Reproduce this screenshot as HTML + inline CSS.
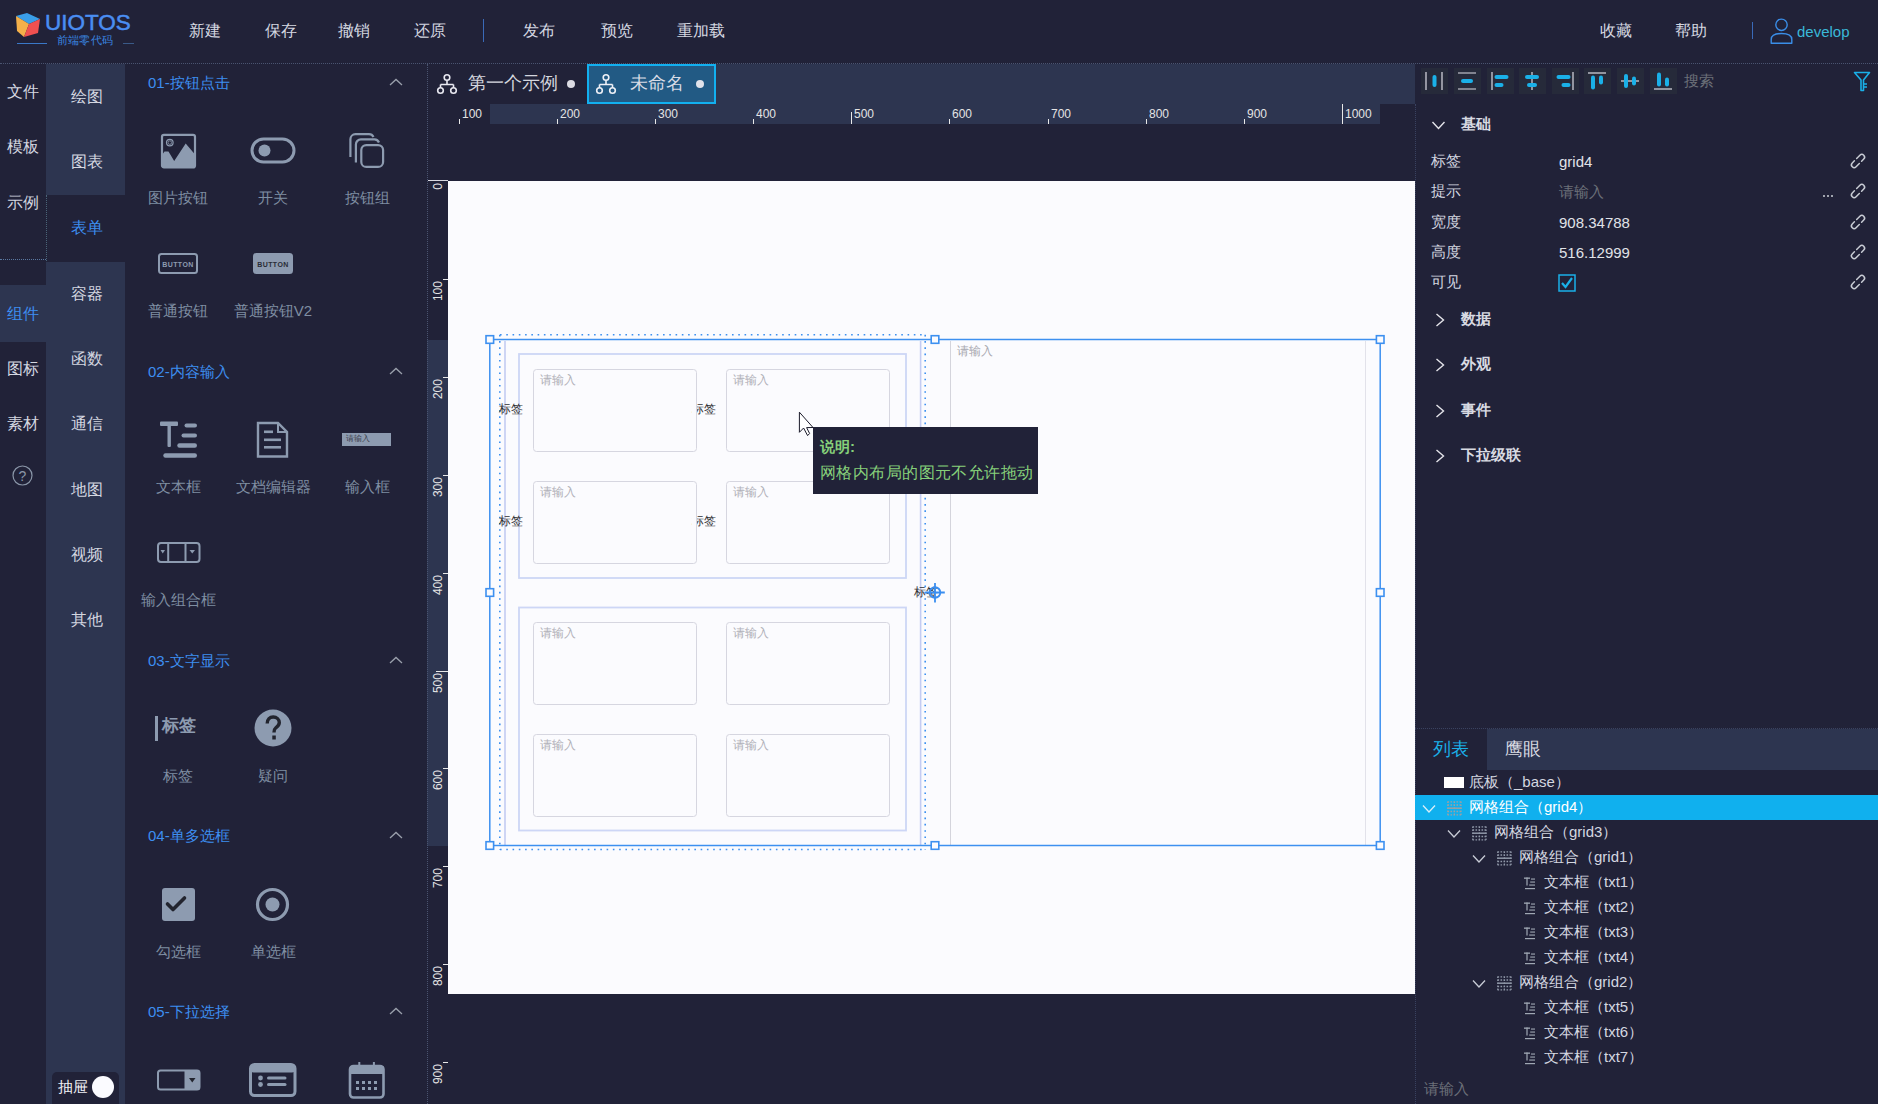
<!DOCTYPE html>
<html><head><meta charset="utf-8">
<style>
*{box-sizing:border-box;margin:0;padding:0}
html,body{width:1878px;height:1104px;overflow:hidden}
body{position:relative;background:#212238;font-family:"Liberation Sans",sans-serif;color:#d6d9e2}
.a{position:absolute}
.t{position:absolute;white-space:nowrap;line-height:1}
.lt{background:#2d3550}
.hd{font-size:16px;color:#d4d7e0}
.n1{font-size:16px;color:#d4d7e0}
.n2{font-size:16px;color:#d4d7e0}
.sec{font-size:15px;color:#3d8ef0}
.lbl{font-size:15px;color:#7f8ea2;text-align:center;width:100px}
.rul{font-size:12px;color:#e4e4e4}
.pl{font-size:15px;color:#d4d7e0}
.pv{font-size:15px;color:#e0e2e8}
.ph{font-size:15px;color:#d8dae2;font-weight:bold}
.tr{font-size:15px;color:#d4d7e0}
</style></head><body>
<div class="a" style="left:0;top:63px;width:1878px;height:1px;border-top:1px dotted #4a5470"></div>
<svg class="a" style="left:14px;top:11px" width="28" height="28" viewBox="0 0 28 28">
<polygon points="2,5 13,2 26,8 15,13" fill="#3a9ee8"/>
<polygon points="2,5 15,13 10,26 3,20" fill="#f4b04a"/>
<polygon points="15,13 26,8 24,22 10,26" fill="#f05050"/>
</svg>
<div class="t" style="left:45px;top:12px;font-size:22.5px;color:#4a8ef2;-webkit-text-stroke:0.5px #4a8ef2">UIOTOS</div>
<div class="t" style="left:57px;top:35px;font-size:11px;color:#3a86e0;letter-spacing:0.2px">前端零代码</div>
<div class="a" style="left:17px;top:43px;width:30px;height:1px;background:#3a78c8"></div>
<div class="a" style="left:123px;top:43px;width:11px;height:1px;background:#3a5a88"></div>
<div class="t hd" style="left:189px;top:23px">新建</div>
<div class="t hd" style="left:265px;top:23px">保存</div>
<div class="t hd" style="left:338px;top:23px">撤销</div>
<div class="t hd" style="left:414px;top:23px">还原</div>
<div class="t hd" style="left:523px;top:23px">发布</div>
<div class="t hd" style="left:601px;top:23px">预览</div>
<div class="t hd" style="left:677px;top:23px">重加载</div>
<div class="t hd" style="left:1600px;top:23px">收藏</div>
<div class="t hd" style="left:1675px;top:23px">帮助</div>
<div class="a" style="left:483px;top:19px;width:1px;height:23px;background:#3a6ab8"></div>
<div class="a" style="left:1752px;top:22px;width:1px;height:17px;background:#3a6ab8"></div>
<svg class="a" style="left:1769px;top:18px" width="25" height="27" viewBox="0 0 25 27">
<circle cx="12.5" cy="6.8" r="5.7" fill="none" stroke="#3a8ee8" stroke-width="1.4"/>
<path d="M2.2,25.2 L2.2,21.5 C2.2,17.5 5.5,15.5 12.5,15.5 C19.5,15.5 22.8,17.5 22.8,21.5 L22.8,25.2 Z" fill="none" stroke="#3a8ee8" stroke-width="1.4" stroke-linejoin="round"/>
</svg>
<div class="t" style="left:1797px;top:24px;font-size:15px;color:#3ab8d8">develop</div>
<div class="a lt" style="left:46px;top:64px;width:79px;height:1040px"></div>
<div class="a" style="left:46px;top:195px;width:79px;height:67px;background:#212238"></div>
<div class="a lt" style="left:0;top:285px;width:46px;height:57px"></div>
<div class="a" style="left:0;top:259px;width:46px;height:1px;border-top:1px dotted #5a78a0"></div>
<div class="a" style="left:46px;top:195px;width:1px;height:66px;border-left:1px dotted #4a6478"></div>
<div class="t n1" style="left:7px;top:84px">文件</div>
<div class="t n1" style="left:7px;top:139px">模板</div>
<div class="t n1" style="left:7px;top:195px">示例</div>
<div class="t n1" style="left:7px;top:306px;color:#3d8ef0">组件</div>
<div class="t n1" style="left:7px;top:361px">图标</div>
<div class="t n1" style="left:7px;top:416px">素材</div>
<svg class="a" style="left:12px;top:465px" width="21" height="21" viewBox="0 0 21 21"><circle cx="10.5" cy="10.5" r="9.5" fill="none" stroke="#8a96a8" stroke-width="1.2"/><text x="10.5" y="15.5" font-size="14" text-anchor="middle" fill="#8a96a8" font-family="Liberation Sans">?</text></svg>
<div class="t n2" style="left:71px;top:89px">绘图</div>
<div class="t n2" style="left:71px;top:154px">图表</div>
<div class="t n2" style="left:71px;top:220px;color:#3d8ef0">表单</div>
<div class="t n2" style="left:71px;top:286px">容器</div>
<div class="t n2" style="left:71px;top:351px">函数</div>
<div class="t n2" style="left:71px;top:416px">通信</div>
<div class="t n2" style="left:71px;top:482px">地图</div>
<div class="t n2" style="left:71px;top:547px">视频</div>
<div class="t n2" style="left:71px;top:612px">其他</div>
<div class="a" style="left:52px;top:1072px;width:67px;height:40px;border-radius:5px;background:#212238"></div>
<div class="t" style="left:58px;top:1079px;font-size:15px;color:#eeeef4">抽屉</div>
<div class="a" style="left:92px;top:1076px;width:22px;height:22px;border-radius:50%;background:#fbfbff"></div>
<div class="t sec" style="left:148px;top:75px">01-按钮点击</div>
<svg class="a" style="left:389px;top:78px" width="14" height="8" viewBox="0 0 14 8"><path d="M1,7 L7,1.5 L13,7" fill="none" stroke="#9aa0ac" stroke-width="1.3"/></svg>
<div class="t sec" style="left:148px;top:364px">02-内容输入</div>
<svg class="a" style="left:389px;top:367px" width="14" height="8" viewBox="0 0 14 8"><path d="M1,7 L7,1.5 L13,7" fill="none" stroke="#9aa0ac" stroke-width="1.3"/></svg>
<div class="t sec" style="left:148px;top:653px">03-文字显示</div>
<svg class="a" style="left:389px;top:656px" width="14" height="8" viewBox="0 0 14 8"><path d="M1,7 L7,1.5 L13,7" fill="none" stroke="#9aa0ac" stroke-width="1.3"/></svg>
<div class="t sec" style="left:148px;top:828px">04-单多选框</div>
<svg class="a" style="left:389px;top:831px" width="14" height="8" viewBox="0 0 14 8"><path d="M1,7 L7,1.5 L13,7" fill="none" stroke="#9aa0ac" stroke-width="1.3"/></svg>
<div class="t sec" style="left:148px;top:1004px">05-下拉选择</div>
<svg class="a" style="left:389px;top:1007px" width="14" height="8" viewBox="0 0 14 8"><path d="M1,7 L7,1.5 L13,7" fill="none" stroke="#9aa0ac" stroke-width="1.3"/></svg>
<div class="t lbl" style="left:128px;top:190px">图片按钮</div>
<div class="t lbl" style="left:223px;top:190px">开关</div>
<div class="t lbl" style="left:317px;top:190px">按钮组</div>
<div class="t lbl" style="left:128px;top:303px">普通按钮</div>
<div class="t lbl" style="left:223px;top:303px">普通按钮V2</div>
<div class="t lbl" style="left:128px;top:479px">文本框</div>
<div class="t lbl" style="left:223px;top:479px">文档编辑器</div>
<div class="t lbl" style="left:317px;top:479px">输入框</div>
<div class="t lbl" style="left:128px;top:592px">输入组合框</div>
<div class="t lbl" style="left:128px;top:768px">标签</div>
<div class="t lbl" style="left:223px;top:768px">疑问</div>
<div class="t lbl" style="left:128px;top:944px">勾选框</div>
<div class="t lbl" style="left:223px;top:944px">单选框</div>
<svg class="a" style="left:160px;top:133px" width="37" height="36" viewBox="0 0 37 36">
<rect x="2" y="1.8" width="33" height="32.6" rx="2" fill="none" stroke="#8d9bb0" stroke-width="2.2"/>
<path d="M2,22 L4.5,18.5 L8.5,18.5 L14.2,28 L25.7,10.5 L35,21.5 L35,34.4 L2,34.4 Z" fill="#8d9bb0"/>
<circle cx="9.8" cy="9.6" r="3.3" fill="none" stroke="#8d9bb0" stroke-width="1.2"/>
<circle cx="9.8" cy="9.6" r="1.8" fill="none" stroke="#8d9bb0" stroke-width="0.8"/>
</svg>
<svg class="a" style="left:250px;top:137px" width="46" height="27" viewBox="0 0 46 27">
<rect x="2" y="2" width="42" height="23" rx="11.5" fill="none" stroke="#8d9bb0" stroke-width="3"/>
<circle cx="14.5" cy="13.5" r="6" fill="#8d9bb0"/>
</svg>
<svg class="a" style="left:348px;top:132px" width="38" height="38" viewBox="0 0 38 38">
<path d="M2.4,25 L2.4,7.2 A5,5 0 0 1 7.4,2.2 L21,2.2 A5,5 0 0 1 25.5,5" fill="none" stroke="#8d9bb0" stroke-width="2.2"/>
<path d="M7.9,30.5 L7.9,12.4 A5,5 0 0 1 12.9,7.4 L26.5,7.4 A5,5 0 0 1 31,10.5" fill="none" stroke="#8d9bb0" stroke-width="2.2"/>
<rect x="13.3" y="13.1" width="21.8" height="21.8" rx="5" fill="none" stroke="#8d9bb0" stroke-width="2.2"/>
</svg>
<svg class="a" style="left:157px;top:252px" width="43" height="24" viewBox="0 0 43 24">
<rect x="2" y="2" width="38" height="19" rx="2.5" fill="none" stroke="#8d9bb0" stroke-width="2"/>
<text x="21" y="14.5" font-size="7" font-weight="bold" text-anchor="middle" fill="#8d9bb0" font-family="Liberation Sans" letter-spacing="0.4">BUTTON</text>
</svg>
<svg class="a" style="left:252px;top:252px" width="43" height="24" viewBox="0 0 43 24">
<rect x="1" y="1" width="40" height="21" rx="3.5" fill="#8d9bb0"/>
<text x="21" y="14.5" font-size="7" font-weight="bold" text-anchor="middle" fill="#2a2c36" font-family="Liberation Sans" letter-spacing="0.4">BUTTON</text>
</svg>
<svg class="a" style="left:159px;top:420px" width="40" height="40" viewBox="0 0 40 40">
<rect x="1" y="1.5" width="18" height="4.5" rx="1" fill="#8d9bb0"/>
<rect x="8.5" y="4" width="3.4" height="23" rx="1" fill="#8d9bb0"/>
<rect x="25.5" y="3.5" width="12.5" height="4" rx="2" fill="#8d9bb0"/>
<rect x="22.5" y="13.5" width="15.5" height="4" rx="2" fill="#8d9bb0"/>
<rect x="18.3" y="23.3" width="19.7" height="4.5" rx="2.2" fill="#8d9bb0"/>
<rect x="4.3" y="33.2" width="33.7" height="4.5" rx="2.2" fill="#8d9bb0"/>
</svg>
<svg class="a" style="left:256px;top:421px" width="34" height="38" viewBox="0 0 34 38">
<path d="M2,2 L22,2 L31,11 L31,35.5 L2,35.5 Z" fill="none" stroke="#8d9bb0" stroke-width="2.4"/>
<path d="M22,2 L22,11 L31,11" fill="none" stroke="#8d9bb0" stroke-width="2"/>
<rect x="8" y="9.5" width="9" height="2.6" fill="#8d9bb0"/>
<rect x="8" y="17.5" width="17" height="2.6" fill="#8d9bb0"/>
<rect x="8" y="25" width="17" height="2.6" fill="#8d9bb0"/>
</svg>
<div class="a" style="left:342px;top:433px;width:49px;height:13px;background:#8d9bb0"></div>
<div class="t" style="left:346px;top:435px;font-size:8px;color:#3c404c">请输入</div>
<svg class="a" style="left:156px;top:541px" width="46" height="23" viewBox="0 0 46 23">
<rect x="2" y="2" width="41.5" height="19" rx="3" fill="none" stroke="#8d9bb0" stroke-width="2"/>
<rect x="11.2" y="2" width="2" height="19" fill="#8d9bb0"/>
<rect x="28.5" y="2" width="2" height="19" fill="#8d9bb0"/>
<path d="M4.5,9 L9,9 L6.75,12.5 Z" fill="#8d9bb0"/>
<path d="M33.5,9 L39,9 L36.25,12.5 Z" fill="#8d9bb0"/>
</svg>
<div class="a" style="left:155px;top:716px;width:3px;height:25px;background:#8d9bb0"></div>
<div class="t" style="left:162px;top:717px;font-size:17px;font-weight:bold;color:#8d9bb0">标签</div>
<svg class="a" style="left:254px;top:709px" width="38" height="38" viewBox="0 0 38 38">
<circle cx="19" cy="19" r="18.5" fill="#8d9bb0"/>
<path d="M13.2,14.5 C13.2,10.5 15.8,8 19.2,8 C22.8,8 25.3,10.5 25.3,13.6 C25.3,16.6 23.2,17.8 21.6,19 C20.3,20 20,21 20,23.5" fill="none" stroke="#22242e" stroke-width="3.4"/>
<rect x="18.3" y="26.5" width="3.5" height="4" fill="#22242e"/>
</svg>
<svg class="a" style="left:161px;top:887px" width="35" height="35" viewBox="0 0 35 35">
<rect x="1" y="1" width="33" height="33" rx="3" fill="#8d9bb0"/>
<path d="M6.5,17 L12,22.5 L23.5,11" fill="none" stroke="#22242e" stroke-width="3.6" stroke-linecap="round" stroke-linejoin="round"/>
</svg>
<svg class="a" style="left:255px;top:887px" width="35" height="35" viewBox="0 0 35 35">
<circle cx="17.5" cy="17.5" r="15" fill="none" stroke="#8d9bb0" stroke-width="3.2"/>
<circle cx="17.5" cy="17.5" r="7" fill="#8d9bb0"/>
</svg>
<svg class="a" style="left:156px;top:1069px" width="46" height="23" viewBox="0 0 46 23">
<rect x="2" y="1.5" width="41.5" height="19" rx="2.5" fill="none" stroke="#8d9bb0" stroke-width="2"/>
<rect x="28.5" y="1.5" width="15" height="19" fill="#8d9bb0"/>
<path d="M33,9 L39.5,9 L36.25,13.5 Z" fill="#22242e"/>
</svg>
<svg class="a" style="left:249px;top:1063px" width="48" height="34" viewBox="0 0 48 34">
<rect x="1.5" y="1.5" width="44.5" height="31" rx="4" fill="none" stroke="#8d9bb0" stroke-width="3"/>
<rect x="1.5" y="1.5" width="44.5" height="8" rx="3" fill="#8d9bb0"/>
<circle cx="11.5" cy="15" r="2.4" fill="#8d9bb0"/>
<circle cx="11.5" cy="21.5" r="2.4" fill="#8d9bb0"/>
<rect x="18" y="13.5" width="19.5" height="3" rx="1.5" fill="#8d9bb0"/>
<rect x="18" y="20" width="19.5" height="3" rx="1.5" fill="#8d9bb0"/>
</svg>
<svg class="a" style="left:348px;top:1061px" width="38" height="39" viewBox="0 0 38 39">
<rect x="2" y="5" width="33.5" height="31.5" rx="3.5" fill="none" stroke="#8d9bb0" stroke-width="2.6"/>
<rect x="2" y="5" width="33.5" height="8" fill="#8d9bb0"/>
<rect x="10.3" y="1" width="2" height="9" fill="#8d9bb0"/>
<rect x="24.9" y="1" width="2" height="9" fill="#8d9bb0"/>
<g fill="#8d9bb0"><rect x="8" y="20" width="3" height="3"/><rect x="14" y="20" width="3" height="3"/><rect x="20" y="20" width="3" height="3"/><rect x="26" y="20" width="3" height="3"/>
<rect x="8" y="26" width="3" height="3"/><rect x="14" y="26" width="3" height="3"/><rect x="20" y="26" width="3" height="3"/><rect x="26" y="26" width="3" height="3"/></g>
</svg>
<div class="a lt" style="left:715px;top:64px;width:700px;height:40px"></div>
<svg class="a" style="left:436px;top:73px" width="22" height="22" viewBox="0 0 22 22">
<circle cx="11" cy="4.5" r="2.8" fill="none" stroke="#e8e8f0" stroke-width="1.6"/>
<path d="M11,7.3 L11,11.5 M4.5,11.5 L17.5,11.5 M4.5,11.5 L4.5,14.8 M17.5,11.5 L17.5,14.8" fill="none" stroke="#e8e8f0" stroke-width="1.6"/>
<circle cx="4.5" cy="17.5" r="2.8" fill="none" stroke="#e8e8f0" stroke-width="1.6"/>
<circle cx="17.5" cy="17.5" r="2.8" fill="none" stroke="#e8e8f0" stroke-width="1.6"/>
</svg>
<div class="t" style="left:468px;top:75px;font-size:17.5px;color:#d4d6de">第一个示例</div>
<div class="a" style="left:567px;top:80px;width:8px;height:8px;border-radius:50%;background:#dcdce4"></div>
<div class="a" style="left:587px;top:64px;width:129px;height:40px;background:#225a84;border:2px solid #12b0f0"></div>
<svg class="a" style="left:595px;top:73px" width="22" height="22" viewBox="0 0 22 22">
<circle cx="11" cy="4.5" r="2.8" fill="none" stroke="#eef0f6" stroke-width="1.6"/>
<path d="M11,7.3 L11,11.5 M4.5,11.5 L17.5,11.5 M4.5,11.5 L4.5,14.8 M17.5,11.5 L17.5,14.8" fill="none" stroke="#eef0f6" stroke-width="1.6"/>
<circle cx="4.5" cy="17.5" r="2.8" fill="none" stroke="#eef0f6" stroke-width="1.6"/>
<circle cx="17.5" cy="17.5" r="2.8" fill="none" stroke="#eef0f6" stroke-width="1.6"/>
</svg>
<div class="t" style="left:630px;top:75px;font-size:17.5px;color:#d8dce6">未命名</div>
<div class="a" style="left:696px;top:80px;width:8px;height:8px;border-radius:50%;background:#e0e2ea"></div>
<div class="a lt" style="left:490px;top:104px;width:890px;height:20px"></div>
<div class="a" style="left:459px;top:119px;width:1px;height:5px;background:#e8e8e8"></div>
<div class="t rul" style="left:462px;top:108px">100</div>
<div class="a" style="left:557px;top:119px;width:1px;height:5px;background:#e8e8e8"></div>
<div class="t rul" style="left:560px;top:108px">200</div>
<div class="a" style="left:655px;top:119px;width:1px;height:5px;background:#e8e8e8"></div>
<div class="t rul" style="left:658px;top:108px">300</div>
<div class="a" style="left:753px;top:119px;width:1px;height:5px;background:#e8e8e8"></div>
<div class="t rul" style="left:756px;top:108px">400</div>
<div class="a" style="left:851px;top:112px;width:1px;height:12px;background:#e8e8e8"></div>
<div class="t rul" style="left:854px;top:108px">500</div>
<div class="a" style="left:949px;top:119px;width:1px;height:5px;background:#e8e8e8"></div>
<div class="t rul" style="left:952px;top:108px">600</div>
<div class="a" style="left:1048px;top:119px;width:1px;height:5px;background:#e8e8e8"></div>
<div class="t rul" style="left:1051px;top:108px">700</div>
<div class="a" style="left:1146px;top:119px;width:1px;height:5px;background:#e8e8e8"></div>
<div class="t rul" style="left:1149px;top:108px">800</div>
<div class="a" style="left:1244px;top:119px;width:1px;height:5px;background:#e8e8e8"></div>
<div class="t rul" style="left:1247px;top:108px">900</div>
<div class="a" style="left:1342px;top:104px;width:1px;height:20px;background:#e8e8e8"></div>
<div class="t rul" style="left:1345px;top:108px">1000</div>
<div class="a lt" style="left:427px;top:340px;width:21px;height:506px"></div>
<div class="a" style="left:427px;top:64px;width:1px;height:1040px;border-left:1px dotted #4a5470"></div>
<div class="a" style="left:428px;top:180px;width:20px;height:1px;background:#d8d8e0"></div>
<div class="t rul" style="left:432px;top:182px;transform-origin:0 0;transform:translate(0px,7.7px) rotate(-90deg)">0</div>
<div class="a" style="left:443px;top:279px;width:5px;height:1px;background:#e8e8e8"></div>
<div class="t rul" style="left:432px;top:280px;transform-origin:0 0;transform:translate(0px,21.1px) rotate(-90deg)">100</div>
<div class="a" style="left:443px;top:377px;width:5px;height:1px;background:#e8e8e8"></div>
<div class="t rul" style="left:432px;top:378px;transform-origin:0 0;transform:translate(0px,21.1px) rotate(-90deg)">200</div>
<div class="a" style="left:443px;top:475px;width:5px;height:1px;background:#e8e8e8"></div>
<div class="t rul" style="left:432px;top:476px;transform-origin:0 0;transform:translate(0px,21.1px) rotate(-90deg)">300</div>
<div class="a" style="left:443px;top:573px;width:5px;height:1px;background:#e8e8e8"></div>
<div class="t rul" style="left:432px;top:574px;transform-origin:0 0;transform:translate(0px,21.1px) rotate(-90deg)">400</div>
<div class="a" style="left:436px;top:671px;width:12px;height:1px;background:#e8e8e8"></div>
<div class="t rul" style="left:432px;top:672px;transform-origin:0 0;transform:translate(0px,21.1px) rotate(-90deg)">500</div>
<div class="a" style="left:443px;top:768px;width:5px;height:1px;background:#e8e8e8"></div>
<div class="t rul" style="left:432px;top:769px;transform-origin:0 0;transform:translate(0px,21.1px) rotate(-90deg)">600</div>
<div class="a" style="left:443px;top:866px;width:5px;height:1px;background:#e8e8e8"></div>
<div class="t rul" style="left:432px;top:867px;transform-origin:0 0;transform:translate(0px,21.1px) rotate(-90deg)">700</div>
<div class="a" style="left:443px;top:964px;width:5px;height:1px;background:#e8e8e8"></div>
<div class="t rul" style="left:432px;top:965px;transform-origin:0 0;transform:translate(0px,21.1px) rotate(-90deg)">800</div>
<div class="a" style="left:443px;top:1062px;width:5px;height:1px;background:#e8e8e8"></div>
<div class="t rul" style="left:432px;top:1063px;transform-origin:0 0;transform:translate(0px,21.1px) rotate(-90deg)">900</div>
<div class="a" style="left:448px;top:181px;width:967px;height:813px;background:#fbfbfe"></div>
<svg class="a" style="left:448px;top:181px" width="967" height="813" viewBox="448 181 967 813">
<g stroke="#3d90f0" stroke-width="1.6" stroke-dasharray="1.6 4.67" fill="none">
<path d="M500,334.8 L925,334.8"/><path d="M500,849.5 L925,849.5"/><path d="M499.8,334.8 L499.8,849.5"/><path d="M925.2,334.8 L925.2,849.5"/>
</g>
<g stroke="#c4ccf2" stroke-width="1.6" fill="none"><path d="M505,341 L505,845"/><path d="M920.6,341 L920.6,845"/></g>
<g stroke="#d4d4dc" stroke-width="1" fill="none"><path d="M950.5,341 L950.5,845"/></g>
<g stroke="#e2e2ea" stroke-width="1" fill="none"><path d="M1365.5,341 L1365.5,845"/></g>
<rect x="519" y="354" width="387" height="224" fill="none" stroke="#cdd6f6" stroke-width="1.8"/>
<rect x="519" y="607.5" width="387" height="223" fill="none" stroke="#cdd6f6" stroke-width="1.8"/>
<rect x="533.5" y="369.5" width="163" height="82" rx="3" fill="#fbfbfe" stroke="#d6d6e0" stroke-width="1"/>
<rect x="726.5" y="369.5" width="163" height="82" rx="3" fill="#fbfbfe" stroke="#d6d6e0" stroke-width="1"/>
<rect x="533.5" y="481.5" width="163" height="82" rx="3" fill="#fbfbfe" stroke="#d6d6e0" stroke-width="1"/>
<rect x="726.5" y="481.5" width="163" height="82" rx="3" fill="#fbfbfe" stroke="#d6d6e0" stroke-width="1"/>
<rect x="533.5" y="622.5" width="163" height="82" rx="3" fill="#fbfbfe" stroke="#d6d6e0" stroke-width="1"/>
<rect x="726.5" y="622.5" width="163" height="82" rx="3" fill="#fbfbfe" stroke="#d6d6e0" stroke-width="1"/>
<rect x="533.5" y="734.5" width="163" height="82" rx="3" fill="#fbfbfe" stroke="#d6d6e0" stroke-width="1"/>
<rect x="726.5" y="734.5" width="163" height="82" rx="3" fill="#fbfbfe" stroke="#d6d6e0" stroke-width="1"/>
</svg>
<div class="t" style="left:540px;top:374px;font-size:12px;color:#b0b0b8">请输入</div>
<div class="t" style="left:733px;top:374px;font-size:12px;color:#b0b0b8">请输入</div>
<div class="t" style="left:540px;top:486px;font-size:12px;color:#b0b0b8">请输入</div>
<div class="t" style="left:733px;top:486px;font-size:12px;color:#b0b0b8">请输入</div>
<div class="t" style="left:540px;top:627px;font-size:12px;color:#b0b0b8">请输入</div>
<div class="t" style="left:733px;top:627px;font-size:12px;color:#b0b0b8">请输入</div>
<div class="t" style="left:540px;top:739px;font-size:12px;color:#b0b0b8">请输入</div>
<div class="t" style="left:733px;top:739px;font-size:12px;color:#b0b0b8">请输入</div>
<div class="t" style="left:499px;top:403px;font-size:12px;color:#303034">标签</div>
<div class="t" style="left:692px;top:403px;font-size:12px;color:#303034">标签</div>
<div class="t" style="left:499px;top:515px;font-size:12px;color:#303034">标签</div>
<div class="t" style="left:692px;top:515px;font-size:12px;color:#303034">标签</div>
<div class="a" style="left:692px;top:402px;width:4px;height:15px;background:#fbfbfe"></div>
<div class="a" style="left:696px;top:402px;width:1px;height:15px;background:#d6d6e0"></div>
<div class="a" style="left:692px;top:514px;width:4px;height:15px;background:#fbfbfe"></div>
<div class="a" style="left:696px;top:514px;width:1px;height:15px;background:#d6d6e0"></div>
<div class="t" style="left:957px;top:345px;font-size:12px;color:#a8a8b0">请输入</div>
<svg class="a" style="left:448px;top:181px" width="967" height="813" viewBox="448 181 967 813">
<rect x="489.8" y="339.5" width="890.4" height="506" fill="none" stroke="#3d90f0" stroke-width="1.5"/>
<rect x="486.0" y="335.7" width="7.6" height="7.6" fill="#fbfbfe" stroke="#3d90f0" stroke-width="1.6"/>
<rect x="931.2" y="335.7" width="7.6" height="7.6" fill="#fbfbfe" stroke="#3d90f0" stroke-width="1.6"/>
<rect x="1376.4" y="335.7" width="7.6" height="7.6" fill="#fbfbfe" stroke="#3d90f0" stroke-width="1.6"/>
<rect x="486.0" y="588.7" width="7.6" height="7.6" fill="#fbfbfe" stroke="#3d90f0" stroke-width="1.6"/>
<rect x="1376.4" y="588.7" width="7.6" height="7.6" fill="#fbfbfe" stroke="#3d90f0" stroke-width="1.6"/>
<rect x="486.0" y="841.7" width="7.6" height="7.6" fill="#fbfbfe" stroke="#3d90f0" stroke-width="1.6"/>
<rect x="931.2" y="841.7" width="7.6" height="7.6" fill="#fbfbfe" stroke="#3d90f0" stroke-width="1.6"/>
<rect x="1376.4" y="841.7" width="7.6" height="7.6" fill="#fbfbfe" stroke="#3d90f0" stroke-width="1.6"/>
</svg>
<div class="t" style="left:914px;top:586px;font-size:12px;color:#303034">标签</div>
<svg class="a" style="left:924px;top:581px" width="23" height="23" viewBox="0 0 23 23">
<circle cx="11" cy="11.5" r="5.3" fill="none" stroke="#3a8ef0" stroke-width="1.9"/>
<path d="M11,2 L11,21.5 M1.5,11.5 L20.8,11.5" stroke="#3a8ef0" stroke-width="1.8"/>
</svg>
<div class="a" style="left:813px;top:427px;width:225px;height:67px;background:#212238"></div>
<div class="t" style="left:820px;top:439px;font-size:15px;font-weight:bold;color:#86d07a">说明:</div>
<div class="t" style="left:820px;top:465px;font-size:16px;letter-spacing:0.42px;color:#86d07a">网格内布局的图元不允许拖动</div>
<svg class="a" style="left:797px;top:410px" width="20" height="26" viewBox="0 0 20 26">
<path d="M2.4,2.2 L2.4,22.3 L6.6,18 L10.6,25.6 L12.6,23.5 L9.6,17.6 L16,17.5 Z" fill="#fff" stroke="#1a1a2a" stroke-width="1" stroke-linejoin="miter"/>
</svg>
<div class="a" style="left:1415px;top:104px;width:1px;height:1000px;border-left:1px dotted #3a4260"></div>
<svg class="a" style="left:1421px;top:68px" width="27" height="26" viewBox="0 0 27 26"><rect x="0" y="0" width="27" height="26" fill="#262a3a"/><path d="M5,4 L5,22 M21,4 L21,22" stroke="#dcdce4" stroke-width="1.2"/><rect x="11.5" y="7" width="4" height="12" rx="2" fill="#1ab0e8"/></svg>
<svg class="a" style="left:1454px;top:68px" width="27" height="26" viewBox="0 0 27 26"><rect x="0" y="0" width="27" height="26" fill="#262a3a"/><path d="M4,5 L22,5 M4,21 L22,21" stroke="#dcdce4" stroke-width="1.2"/><rect x="7" y="11" width="12" height="4" rx="2" fill="#1ab0e8"/></svg>
<svg class="a" style="left:1487px;top:68px" width="27" height="26" viewBox="0 0 27 26"><rect x="0" y="0" width="27" height="26" fill="#262a3a"/><path d="M5,4 L5,22" stroke="#dcdce4" stroke-width="1.2"/><rect x="7.5" y="7" width="14" height="4" rx="2" fill="#1ab0e8"/><rect x="7.5" y="15" width="9" height="4" rx="2" fill="#1ab0e8"/></svg>
<svg class="a" style="left:1519px;top:68px" width="27" height="26" viewBox="0 0 27 26"><rect x="0" y="0" width="27" height="26" fill="#262a3a"/><path d="M13,4 L13,22" stroke="#dcdce4" stroke-width="1.2"/><rect x="6" y="7" width="14" height="4" rx="2" fill="#1ab0e8"/><rect x="8" y="15" width="10" height="4" rx="2" fill="#1ab0e8"/></svg>
<svg class="a" style="left:1552px;top:68px" width="27" height="26" viewBox="0 0 27 26"><rect x="0" y="0" width="27" height="26" fill="#262a3a"/><path d="M21,4 L21,22" stroke="#dcdce4" stroke-width="1.2"/><rect x="4.5" y="7" width="14" height="4" rx="2" fill="#1ab0e8"/><rect x="9.5" y="15" width="9" height="4" rx="2" fill="#1ab0e8"/></svg>
<svg class="a" style="left:1584px;top:68px" width="27" height="26" viewBox="0 0 27 26"><rect x="0" y="0" width="27" height="26" fill="#262a3a"/><path d="M4,5 L22,5" stroke="#dcdce4" stroke-width="1.2"/><rect x="7" y="7.5" width="4" height="14" rx="2" fill="#1ab0e8"/><rect x="15" y="7.5" width="4" height="9" rx="2" fill="#1ab0e8"/></svg>
<svg class="a" style="left:1617px;top:68px" width="27" height="26" viewBox="0 0 27 26"><rect x="0" y="0" width="27" height="26" fill="#262a3a"/><path d="M4,13 L22,13" stroke="#dcdce4" stroke-width="1.2"/><rect x="7" y="6" width="4" height="14" rx="2" fill="#1ab0e8"/><rect x="15" y="8.5" width="4" height="9" rx="2" fill="#1ab0e8"/></svg>
<svg class="a" style="left:1650px;top:68px" width="27" height="26" viewBox="0 0 27 26"><rect x="0" y="0" width="27" height="26" fill="#262a3a"/><path d="M4,21 L22,21" stroke="#dcdce4" stroke-width="1.2"/><rect x="7" y="4.5" width="4" height="14" rx="2" fill="#1ab0e8"/><rect x="15" y="9.5" width="4" height="9" rx="2" fill="#1ab0e8"/></svg>
<div class="t" style="left:1684px;top:73px;font-size:15px;color:#6c7078">搜索</div>
<svg class="a" style="left:1853px;top:71px" width="18" height="21" viewBox="0 0 18 21">
<path d="M1.5,1.5 L16.5,1.5 L10.5,9 L10.5,19.5 L8,19.5 L8,9 Z" fill="none" stroke="#1ab0e8" stroke-width="1.6" stroke-linejoin="round"/>
<path d="M10.5,13 L14,13 M10.5,16 L14,16" stroke="#1ab0e8" stroke-width="1.4"/>
</svg>
<svg class="a" style="left:1431px;top:120px" width="15" height="10" viewBox="0 0 15 10"><path d="M1.5,2 L7.5,8.5 L13.5,2" fill="none" stroke="#e4e4ea" stroke-width="1.4"/></svg>
<div class="t ph" style="left:1461px;top:116px">基础</div>
<div class="t pl" style="left:1431px;top:153px">标签</div>
<div class="t pv" style="left:1559px;top:154px;color:#e0e2e8">grid4</div>
<svg class="a" style="left:1849px;top:152px" width="18" height="18" viewBox="0 0 18 18">
<g transform="rotate(45 9 9)" fill="none" stroke="#c8ccd4" stroke-width="1.5" stroke-linecap="round">
<path d="M6.3,8.2 L6.3,3.6 A2.7,2.7 0 0 1 11.7,3.6 L11.7,6.6"/>
<path d="M11.7,9.8 L11.7,14.4 A2.7,2.7 0 0 1 6.3,14.4 L6.3,11.4"/>
</g></svg>
<div class="t pl" style="left:1431px;top:183px">提示</div>
<div class="t pv" style="left:1559px;top:184px;color:#6c7078">请输入</div>
<svg class="a" style="left:1849px;top:182px" width="18" height="18" viewBox="0 0 18 18">
<g transform="rotate(45 9 9)" fill="none" stroke="#c8ccd4" stroke-width="1.5" stroke-linecap="round">
<path d="M6.3,8.2 L6.3,3.6 A2.7,2.7 0 0 1 11.7,3.6 L11.7,6.6"/>
<path d="M11.7,9.8 L11.7,14.4 A2.7,2.7 0 0 1 6.3,14.4 L6.3,11.4"/>
</g></svg>
<div class="t pl" style="left:1431px;top:214px">宽度</div>
<div class="t pv" style="left:1559px;top:215px;color:#e0e2e8">908.34788</div>
<svg class="a" style="left:1849px;top:213px" width="18" height="18" viewBox="0 0 18 18">
<g transform="rotate(45 9 9)" fill="none" stroke="#c8ccd4" stroke-width="1.5" stroke-linecap="round">
<path d="M6.3,8.2 L6.3,3.6 A2.7,2.7 0 0 1 11.7,3.6 L11.7,6.6"/>
<path d="M11.7,9.8 L11.7,14.4 A2.7,2.7 0 0 1 6.3,14.4 L6.3,11.4"/>
</g></svg>
<div class="t pl" style="left:1431px;top:244px">高度</div>
<div class="t pv" style="left:1559px;top:245px;color:#e0e2e8">516.12999</div>
<svg class="a" style="left:1849px;top:243px" width="18" height="18" viewBox="0 0 18 18">
<g transform="rotate(45 9 9)" fill="none" stroke="#c8ccd4" stroke-width="1.5" stroke-linecap="round">
<path d="M6.3,8.2 L6.3,3.6 A2.7,2.7 0 0 1 11.7,3.6 L11.7,6.6"/>
<path d="M11.7,9.8 L11.7,14.4 A2.7,2.7 0 0 1 6.3,14.4 L6.3,11.4"/>
</g></svg>
<div class="t pl" style="left:1431px;top:274px">可见</div>
<svg class="a" style="left:1849px;top:273px" width="18" height="18" viewBox="0 0 18 18">
<g transform="rotate(45 9 9)" fill="none" stroke="#c8ccd4" stroke-width="1.5" stroke-linecap="round">
<path d="M6.3,8.2 L6.3,3.6 A2.7,2.7 0 0 1 11.7,3.6 L11.7,6.6"/>
<path d="M11.7,9.8 L11.7,14.4 A2.7,2.7 0 0 1 6.3,14.4 L6.3,11.4"/>
</g></svg>
<div class="a" style="left:1823px;top:195px;width:2px;height:2px;background:#a0a4ae"></div><div class="a" style="left:1827px;top:195px;width:2px;height:2px;background:#a0a4ae"></div><div class="a" style="left:1831px;top:195px;width:2px;height:2px;background:#a0a4ae"></div>
<svg class="a" style="left:1558px;top:274px" width="18" height="18" viewBox="0 0 18 18">
<rect x="1" y="1" width="16" height="16" fill="none" stroke="#1ab0e8" stroke-width="1.5"/>
<path d="M4,9 L7.5,13 L14,4" fill="none" stroke="#1ab0e8" stroke-width="2.2"/>
</svg>
<svg class="a" style="left:1435px;top:312px" width="10" height="15" viewBox="0 0 10 15"><path d="M1.5,2 L8.5,8 L1.5,14" fill="none" stroke="#e4e4ea" stroke-width="1.4"/></svg>
<div class="t ph" style="left:1461px;top:311px">数据</div>
<svg class="a" style="left:1435px;top:357px" width="10" height="15" viewBox="0 0 10 15"><path d="M1.5,2 L8.5,8 L1.5,14" fill="none" stroke="#e4e4ea" stroke-width="1.4"/></svg>
<div class="t ph" style="left:1461px;top:356px">外观</div>
<svg class="a" style="left:1435px;top:403px" width="10" height="15" viewBox="0 0 10 15"><path d="M1.5,2 L8.5,8 L1.5,14" fill="none" stroke="#e4e4ea" stroke-width="1.4"/></svg>
<div class="t ph" style="left:1461px;top:402px">事件</div>
<svg class="a" style="left:1435px;top:448px" width="10" height="15" viewBox="0 0 10 15"><path d="M1.5,2 L8.5,8 L1.5,14" fill="none" stroke="#e4e4ea" stroke-width="1.4"/></svg>
<div class="t ph" style="left:1461px;top:447px">下拉级联</div>
<div class="a" style="left:1415px;top:728px;width:463px;height:1px;border-top:1px dotted #3a4260"></div>
<div class="a lt" style="left:1487px;top:729px;width:391px;height:41px"></div>
<div class="t" style="left:1433px;top:740px;font-size:18px;color:#1ab0e8">列表</div>
<div class="t" style="left:1505px;top:740px;font-size:18px;color:#d8dae2">鹰眼</div>
<div class="a" style="left:1415px;top:795px;width:463px;height:25px;background:#10b0ee"></div>
<div class="a" style="left:1444px;top:777px;width:20px;height:11px;background:#fff"></div>
<div class="t tr" style="left:1469px;top:774px;color:#d4d7e0">底板（_base）</div>
<svg class="a" style="left:1422px;top:804px" width="14" height="10" viewBox="0 0 14 10"><path d="M1,1.5 L7,8 L13,1.5" fill="none" stroke="#d8eef8" stroke-width="1.3"/></svg>
<svg class="a" style="left:1447px;top:801px" width="15" height="15" viewBox="0 0 15 15">
<g fill="none" stroke="#a0a0a0" stroke-width="1.3" stroke-dasharray="1.6 1.4">
<path d="M0.5,0.8 L14.5,0.8 M0.5,13.8 L14.5,13.8 M0.8,0.5 L0.8,14.5 M14,0.5 L14,14.5 M0.5,4 L14.5,4 M0.5,10.5 L14.5,10.5 M7.4,0.5 L7.4,14.5"/>
</g><path d="M0.5,7.2 L14.5,7.2" stroke="#a0a0a0" stroke-width="1.5"/></svg>
<div class="t tr" style="left:1469px;top:799px;color:#ffffff">网格组合（grid4）</div>
<svg class="a" style="left:1447px;top:829px" width="14" height="10" viewBox="0 0 14 10"><path d="M1,1.5 L7,8 L13,1.5" fill="none" stroke="#c8ccd6" stroke-width="1.3"/></svg>
<svg class="a" style="left:1472px;top:826px" width="15" height="15" viewBox="0 0 15 15">
<g fill="none" stroke="#9098a8" stroke-width="1.3" stroke-dasharray="1.6 1.4">
<path d="M0.5,0.8 L14.5,0.8 M0.5,13.8 L14.5,13.8 M0.8,0.5 L0.8,14.5 M14,0.5 L14,14.5 M0.5,4 L14.5,4 M0.5,10.5 L14.5,10.5 M7.4,0.5 L7.4,14.5"/>
</g><path d="M0.5,7.2 L14.5,7.2" stroke="#9098a8" stroke-width="1.5"/></svg>
<div class="t tr" style="left:1494px;top:824px;color:#d4d7e0">网格组合（grid3）</div>
<svg class="a" style="left:1472px;top:854px" width="14" height="10" viewBox="0 0 14 10"><path d="M1,1.5 L7,8 L13,1.5" fill="none" stroke="#c8ccd6" stroke-width="1.3"/></svg>
<svg class="a" style="left:1497px;top:851px" width="15" height="15" viewBox="0 0 15 15">
<g fill="none" stroke="#9098a8" stroke-width="1.3" stroke-dasharray="1.6 1.4">
<path d="M0.5,0.8 L14.5,0.8 M0.5,13.8 L14.5,13.8 M0.8,0.5 L0.8,14.5 M14,0.5 L14,14.5 M0.5,4 L14.5,4 M0.5,10.5 L14.5,10.5 M7.4,0.5 L7.4,14.5"/>
</g><path d="M0.5,7.2 L14.5,7.2" stroke="#9098a8" stroke-width="1.5"/></svg>
<div class="t tr" style="left:1519px;top:849px;color:#d4d7e0">网格组合（grid1）</div>
<svg class="a" style="left:1524px;top:877px" width="12" height="13" viewBox="0 0 12 13">
<g fill="#a0a8b4"><rect x="0" y="0.5" width="6" height="1.3"/><rect x="2.4" y="0.5" width="1.2" height="8"/>
<rect x="7" y="1.5" width="4" height="1.1"/><rect x="6.2" y="4.5" width="4.8" height="1.1"/><rect x="5.2" y="7.5" width="5.8" height="1.1"/><rect x="1" y="11" width="10" height="1.2"/></g></svg>
<div class="t tr" style="left:1544px;top:874px;color:#d4d7e0">文本框（txt1）</div>
<svg class="a" style="left:1524px;top:902px" width="12" height="13" viewBox="0 0 12 13">
<g fill="#a0a8b4"><rect x="0" y="0.5" width="6" height="1.3"/><rect x="2.4" y="0.5" width="1.2" height="8"/>
<rect x="7" y="1.5" width="4" height="1.1"/><rect x="6.2" y="4.5" width="4.8" height="1.1"/><rect x="5.2" y="7.5" width="5.8" height="1.1"/><rect x="1" y="11" width="10" height="1.2"/></g></svg>
<div class="t tr" style="left:1544px;top:899px;color:#d4d7e0">文本框（txt2）</div>
<svg class="a" style="left:1524px;top:927px" width="12" height="13" viewBox="0 0 12 13">
<g fill="#a0a8b4"><rect x="0" y="0.5" width="6" height="1.3"/><rect x="2.4" y="0.5" width="1.2" height="8"/>
<rect x="7" y="1.5" width="4" height="1.1"/><rect x="6.2" y="4.5" width="4.8" height="1.1"/><rect x="5.2" y="7.5" width="5.8" height="1.1"/><rect x="1" y="11" width="10" height="1.2"/></g></svg>
<div class="t tr" style="left:1544px;top:924px;color:#d4d7e0">文本框（txt3）</div>
<svg class="a" style="left:1524px;top:952px" width="12" height="13" viewBox="0 0 12 13">
<g fill="#a0a8b4"><rect x="0" y="0.5" width="6" height="1.3"/><rect x="2.4" y="0.5" width="1.2" height="8"/>
<rect x="7" y="1.5" width="4" height="1.1"/><rect x="6.2" y="4.5" width="4.8" height="1.1"/><rect x="5.2" y="7.5" width="5.8" height="1.1"/><rect x="1" y="11" width="10" height="1.2"/></g></svg>
<div class="t tr" style="left:1544px;top:949px;color:#d4d7e0">文本框（txt4）</div>
<svg class="a" style="left:1472px;top:979px" width="14" height="10" viewBox="0 0 14 10"><path d="M1,1.5 L7,8 L13,1.5" fill="none" stroke="#c8ccd6" stroke-width="1.3"/></svg>
<svg class="a" style="left:1497px;top:976px" width="15" height="15" viewBox="0 0 15 15">
<g fill="none" stroke="#9098a8" stroke-width="1.3" stroke-dasharray="1.6 1.4">
<path d="M0.5,0.8 L14.5,0.8 M0.5,13.8 L14.5,13.8 M0.8,0.5 L0.8,14.5 M14,0.5 L14,14.5 M0.5,4 L14.5,4 M0.5,10.5 L14.5,10.5 M7.4,0.5 L7.4,14.5"/>
</g><path d="M0.5,7.2 L14.5,7.2" stroke="#9098a8" stroke-width="1.5"/></svg>
<div class="t tr" style="left:1519px;top:974px;color:#d4d7e0">网格组合（grid2）</div>
<svg class="a" style="left:1524px;top:1002px" width="12" height="13" viewBox="0 0 12 13">
<g fill="#a0a8b4"><rect x="0" y="0.5" width="6" height="1.3"/><rect x="2.4" y="0.5" width="1.2" height="8"/>
<rect x="7" y="1.5" width="4" height="1.1"/><rect x="6.2" y="4.5" width="4.8" height="1.1"/><rect x="5.2" y="7.5" width="5.8" height="1.1"/><rect x="1" y="11" width="10" height="1.2"/></g></svg>
<div class="t tr" style="left:1544px;top:999px;color:#d4d7e0">文本框（txt5）</div>
<svg class="a" style="left:1524px;top:1027px" width="12" height="13" viewBox="0 0 12 13">
<g fill="#a0a8b4"><rect x="0" y="0.5" width="6" height="1.3"/><rect x="2.4" y="0.5" width="1.2" height="8"/>
<rect x="7" y="1.5" width="4" height="1.1"/><rect x="6.2" y="4.5" width="4.8" height="1.1"/><rect x="5.2" y="7.5" width="5.8" height="1.1"/><rect x="1" y="11" width="10" height="1.2"/></g></svg>
<div class="t tr" style="left:1544px;top:1024px;color:#d4d7e0">文本框（txt6）</div>
<svg class="a" style="left:1524px;top:1052px" width="12" height="13" viewBox="0 0 12 13">
<g fill="#a0a8b4"><rect x="0" y="0.5" width="6" height="1.3"/><rect x="2.4" y="0.5" width="1.2" height="8"/>
<rect x="7" y="1.5" width="4" height="1.1"/><rect x="6.2" y="4.5" width="4.8" height="1.1"/><rect x="5.2" y="7.5" width="5.8" height="1.1"/><rect x="1" y="11" width="10" height="1.2"/></g></svg>
<div class="t tr" style="left:1544px;top:1049px;color:#d4d7e0">文本框（txt7）</div>
<div class="t" style="left:1424px;top:1081px;font-size:15px;color:#6c7078">请输入</div>
</body></html>
